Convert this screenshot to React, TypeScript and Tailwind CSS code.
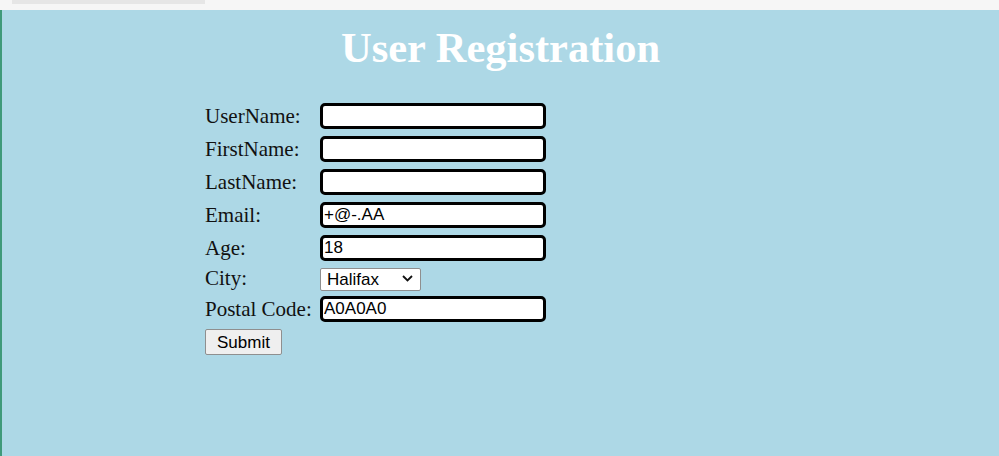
import { useState } from 'react'

const serif = { fontFamily: '"Liberation Serif", "Times New Roman", serif' }
const sans = { fontFamily: '"Liberation Sans", Arial, sans-serif' }

const CITIES = ['Halifax', 'Toronto', 'Montreal', 'Vancouver']

function Field({
  label,
  className = '',
  children,
}: {
  label: string
  className?: string
  children: React.ReactNode
}) {
  return (
    <div className={`flex items-center ${className}`}>
      <label className="w-[115px] shrink-0 text-[21px] leading-none text-[#111]" style={serif}>
        {label}
      </label>
      {children}
    </div>
  )
}

function TextInput({ value, onChange }: { value: string; onChange: (v: string) => void }) {
  return (
    <input
      type="text"
      value={value}
      onChange={(e) => onChange(e.target.value)}
      className="box-border h-[26px] w-[226px] rounded-[5px] border-[3px] border-black bg-white px-[1px] text-[17px] leading-none text-black outline-none"
      style={sans}
    />
  )
}

export default function App() {
  const [form, setForm] = useState({
    userName: '',
    firstName: '',
    lastName: '',
    email: '+@-.AA',
    age: '18',
    city: 'Halifax',
    postal: 'A0A0A0',
  })

  const set = (key: keyof typeof form) => (v: string) => setForm((f) => ({ ...f, [key]: v }))

  return (
    <div className="flex min-h-[456px] w-full flex-col bg-[#add8e6]">
      {/* browser chrome strip */}
      <div className="h-[10px] shrink-0 bg-[#f6f6f6]">
        <div className="ml-[12px] h-[4px] w-[193px] bg-[#e6e6e6]" />
      </div>

      <div className="flex flex-1 flex-col border-l-[2px] border-[#3f9a7a]">
        <h1
          className="mt-[14px] text-center text-[42.5px] font-bold leading-[47px] text-white"
          style={serif}
        >
          User Registration
        </h1>

        <form
          className="ml-[203px] mt-[32px] flex flex-col gap-[7px]"
          onSubmit={(e) => e.preventDefault()}
        >
          <Field label="UserName:">
            <TextInput value={form.userName} onChange={set('userName')} />
          </Field>
          <Field label="FirstName:">
            <TextInput value={form.firstName} onChange={set('firstName')} />
          </Field>
          <Field label="LastName:">
            <TextInput value={form.lastName} onChange={set('lastName')} />
          </Field>
          <Field label="Email:">
            <TextInput value={form.email} onChange={set('email')} />
          </Field>
          <Field label="Age:">
            <TextInput value={form.age} onChange={set('age')} />
          </Field>
          <Field label="City:" className="-mt-[1px]">
            <div className="relative h-[23px] w-[101px]">
              <select
                value={form.city}
                onChange={(e) => set('city')(e.target.value)}
                className="box-border h-full w-full appearance-none rounded-[2px] border border-[#8f8f8f] bg-white pl-[6px] text-[17px] leading-none text-black outline-none"
                style={sans}
              >
                {CITIES.map((c) => (
                  <option key={c}>{c}</option>
                ))}
              </select>
              <svg
                className="pointer-events-none absolute right-[8px] top-[8px]"
                width="11"
                height="7"
                viewBox="0 0 11 7"
                fill="none"
              >
                <path d="M1 1l4.5 4.5L10 1" stroke="#111" strokeWidth="1.8" />
              </svg>
            </div>
          </Field>
          <Field label="Postal Code:" className="-mt-[1px]">
            <TextInput value={form.postal} onChange={set('postal')} />
          </Field>
          <div>
            <button
              type="submit"
              className="h-[26px] w-[77px] rounded-[2px] border border-[#8f8f8f] bg-[#efefef] text-[17px] leading-none text-black"
              style={sans}
            >
              Submit
            </button>
          </div>
        </form>
      </div>
    </div>
  )
}
